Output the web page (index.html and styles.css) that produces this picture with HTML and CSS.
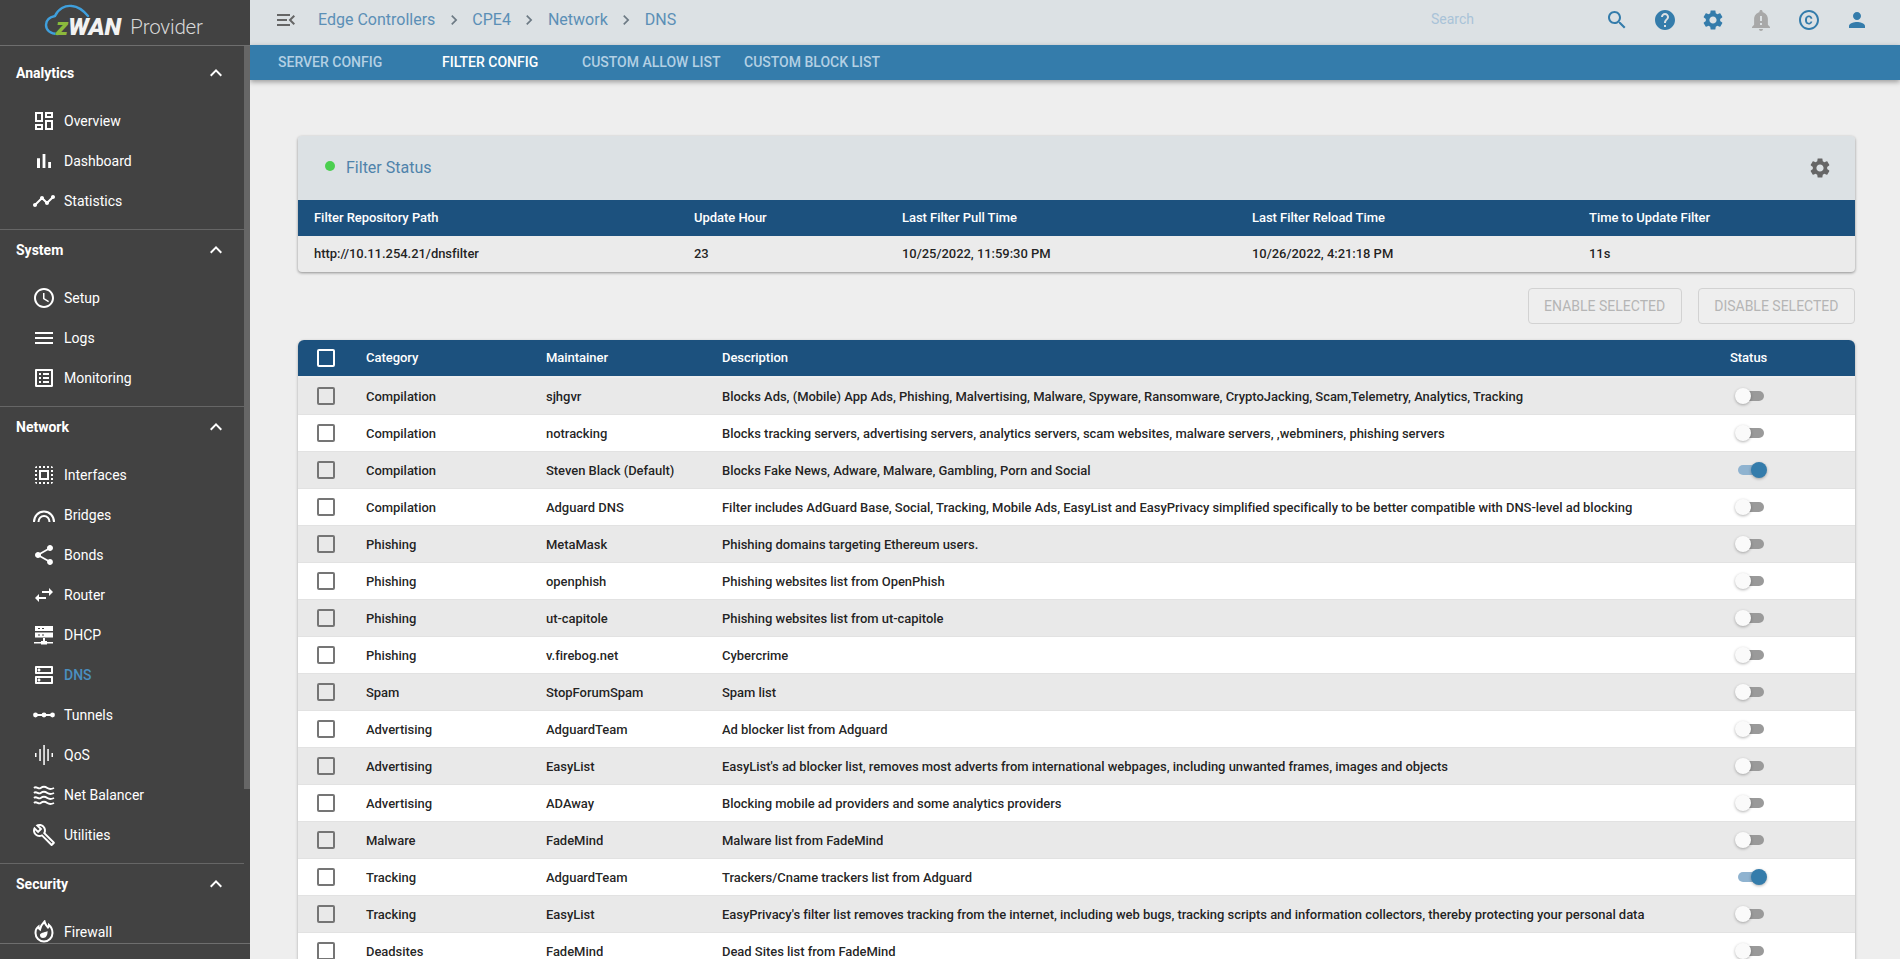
FILE: index.html
```html
<!DOCTYPE html>
<html lang="en">
<head>
  <meta charset="UTF-8" />
  <meta name="viewport" content="width=device-width, initial-scale=1.0" />
  <title>zWAN Provider - DNS</title>
  <link rel="stylesheet" href="styles.css">
</head>
<body>
  <aside class="sidebar">
    <div class="logo">
      <svg class="logo-cloud" viewBox="0 0 90 36" width="90" height="36"><path d="M14 30C6 30 2 26 2 21c0-5 4-8 9-9C14 5 21 1 28 2c6 .5 11 4 16 10" fill="none" stroke="#3f9fdc" stroke-width="2.4" stroke-linecap="round"/></svg>
      <span class="logo-mark"><span class="logo-z">z</span>WAN</span>
      <span class="logo-name">Provider</span>
    </div>
    <div class="side-body">
      <nav class="side-nav">
        <section class="side-group">
          <div class="group-title">Analytics <svg viewBox="0 0 24 24"><path d="M7.41 15.41L12 10.83l4.59 4.58L18 14l-6-6-6 6z"/></svg></div>
          <a class="side-item"><svg viewBox="0 0 24 24"><path d="M19 5v2h-4V5h4M9 5v6H5V5h4m10 8v6h-4v-6h4M9 17v2H5v-2h4M21 3h-8v6h8V3zM11 3H3v10h8V3zm10 8h-8v10h8V11zm-10 4H3v6h8v-6z"/></svg>Overview</a>
          <a class="side-item"><svg viewBox="0 0 24 24"><path d="M5 9.2h3V19H5zM10.6 5h2.8v14h-2.8zm5.6 8H19v6h-2.8z"/></svg>Dashboard</a>
          <a class="side-item"><svg viewBox="0 0 24 24"><path d="M23 8c0 1.1-.9 2-2 2-.18 0-.35-.02-.51-.07l-3.56 3.55c.05.16.07.34.07.52 0 1.1-.9 2-2 2s-2-.9-2-2c0-.18.02-.36.07-.52l-2.55-2.55c-.16.05-.34.07-.52.07s-.36-.02-.52-.07l-4.55 4.56c.05.16.07.33.07.51 0 1.1-.9 2-2 2s-2-.9-2-2 .9-2 2-2c.18 0 .35.02.51.07l4.56-4.55C8.02 9.36 8 9.18 8 9c0-1.1.9-2 2-2s2 .9 2 2c0 .18-.02.36-.07.52l2.55 2.55c.16-.05.34-.07.52-.07s.36.02.52.07l3.55-3.56C19.02 8.35 19 8.18 19 8c0-1.1.9-2 2-2s2 .9 2 2z"/></svg>Statistics</a>
        </section>
        <section class="side-group">
          <div class="group-title">System <svg viewBox="0 0 24 24"><path d="M7.41 15.41L12 10.83l4.59 4.58L18 14l-6-6-6 6z"/></svg></div>
          <a class="side-item"><svg viewBox="0 0 24 24"><path d="M11.99 2C6.47 2 2 6.48 2 12s4.47 10 9.99 10C17.52 22 22 17.52 22 12S17.52 2 11.99 2zM12 20c-4.42 0-8-3.58-8-8s3.58-8 8-8 8 3.58 8 8-3.58 8-8 8zm.5-13H11v6l5.25 3.15.75-1.23-4.5-2.67z"/></svg>Setup</a>
          <a class="side-item"><svg viewBox="0 0 24 24"><path d="M3 18h18v-2H3v2zm0-5h18v-2H3v2zm0-7v2h18V6H3z"/></svg>Logs</a>
          <a class="side-item"><svg viewBox="0 0 24 24"><path d="M19 5v14H5V5h14m1.1-2H3.9c-.5 0-.9.4-.9.9v16.2c0 .4.4.9.9.9h16.2c.4 0 .9-.5.9-.9V3.9c0-.5-.5-.9-.9-.9zM11 7h6v2h-6V7zm0 4h6v2h-6v-2zm0 4h6v2h-6zM7 7h2v2H7zm0 4h2v2H7zm0 4h2v2H7z"/></svg>Monitoring</a>
        </section>
        <section class="side-group">
          <div class="group-title">Network <svg viewBox="0 0 24 24"><path d="M7.41 15.41L12 10.83l4.59 4.58L18 14l-6-6-6 6z"/></svg></div>
          <a class="side-item"><svg viewBox="0 0 24 24"><path d="M3 5h2V3c-1.1 0-2 .9-2 2zm0 8h2v-2H3v2zm4 8h2v-2H7v2zM3 9h2V7H3v2zm10-6h-2v2h2V3zm6 0v2h2c0-1.1-.9-2-2-2zM5 21v-2H3c0 1.1.9 2 2 2zm-2-4h2v-2H3v2zM9 3H7v2h2V3zm2 18h2v-2h-2v2zm8-8h2v-2h-2v2zm0 8c1.1 0 2-.9 2-2h-2v2zm0-12h2V7h-2v2zm0 8h2v-2h-2v2zm-4 4h2v-2h-2v2zm0-16h2V3h-2v2zM7 17h10V7H7v10zm2-8h6v6H9V9z"/></svg>Interfaces</a>
          <a class="side-item"><svg viewBox="0 0 24 24"><path d="M2 19c0-6 4.5-10.5 10-10.500S22 13 22 19M6.500 19c0-3.500 2.500-6 5.500-6s5.500 2.500 5.500 6" fill="none" stroke="#fff" stroke-width="2"/></svg>Bridges</a>
          <a class="side-item"><svg viewBox="0 0 24 24"><path d="M18 16.08c-.76 0-1.44.3-1.96.77L8.91 12.7c.05-.23.09-.46.09-.7s-.04-.47-.09-.7l7.05-4.11c.54.5 1.25.81 2.04.81 1.66 0 3-1.34 3-3s-1.34-3-3-3-3 1.34-3 3c0 .24.04.47.09.7L8.04 9.81C7.5 9.31 6.79 9 6 9c-1.66 0-3 1.34-3 3s1.34 3 3 3c.79 0 1.5-.31 2.04-.81l7.12 4.16c-.05.21-.08.43-.08.65 0 1.61 1.31 2.92 2.92 2.92 1.61 0 2.92-1.31 2.92-2.92s-1.31-2.92-2.92-2.92z"/></svg>Bonds</a>
          <a class="side-item"><svg viewBox="0 0 24 24"><path d="M6.99 11L3 15l3.99 4v-3H14v-2H6.990v-3zM21 9l-3.990-4v3H10v2h7.010v3L21 9z"/></svg>Router</a>
          <a class="side-item"><svg viewBox="0 0 24 24"><path fill-rule="evenodd" d="M3 3h18v5H3zM6 5v1h2V5zm4 0v1h2V5zM3 9.500h18v5H3zM6 11.500v1h2v-1zm4 0v1h2v-1zM11 15h2v3h2v1h6v1.500h-6v1H9v-1H2V19h7v-1h2z"/></svg>DHCP</a>
          <a class="side-item is-active"><svg viewBox="0 0 24 24"><path d="M19 15v4H5v-4h14m1-2H4c-.55 0-1 .45-1 1v6c0 .55.45 1 1 1h16c.55 0 1-.45 1-1v-6c0-.55-.45-1-1-1zM7 18.500c-.82 0-1.500-.67-1.500-1.500s.68-1.500 1.500-1.500 1.500.67 1.500 1.500-.67 1.500-1.500 1.500zM19 5v4H5V5h14m1-2H4c-.55 0-1 .45-1 1v6c0 .55.45 1 1 1h16c.55 0 1-.45 1-1V4c0-.55-.45-1-1-1zM7 8.500c-.82 0-1.500-.67-1.500-1.500S6.180 5.500 7 5.500s1.500.68 1.500 1.500S7.830 8.500 7 8.500z"/></svg>DNS</a>
          <a class="side-item"><svg viewBox="0 0 24 24"><path d="M2 11h20v2H2z"/><circle cx="3.500" cy="12" r="2.400"/><circle cx="12" cy="12" r="2.400"/><circle cx="20.500" cy="12" r="2.400"/></svg>Tunnels</a>
          <a class="side-item"><svg viewBox="0 0 24 24"><path d="M3 10h1.500v4H3zM7.300 6h1.500v12H7.300zM11.300 2h1.500v20h-1.500zM15.300 6h1.500v12h-1.500zM19.500 10H21v4h-1.500z"/></svg>QoS</a>
          <a class="side-item"><svg viewBox="0 0 24 24"><path d="M2 5c2.500-2.400 4.300 1.800 6.700 0s4-1.800 6.600 0 4.200 1.200 6.700 0M2 10c2.500-2.400 4.300 1.800 6.700 0s4-1.800 6.600 0 4.200 1.200 6.700 0M2 15c2.500-2.400 4.300 1.800 6.700 0s4-1.800 6.600 0 4.200 1.200 6.700 0M2 20c2.500-2.400 4.300 1.800 6.700 0s4-1.800 6.600 0 4.200 1.200 6.700 0" fill="none" stroke="#fff" stroke-width="1.900"/></svg>Net Balancer</a>
          <a class="side-item"><svg viewBox="0 0 24 24"><path d="M22.610 18.990l-9.080-9.080c.93-2.340.45-5.100-1.440-7C9.790.61 6.210.4 3.660 2.260L7.500 6.110 6.080 7.520 2.250 3.690C.39 6.230.6 9.820 2.900 12.110c1.860 1.860 4.570 2.350 6.890 1.480l9.110 9.110c.39.39 1.020.39 1.410 0l2.300-2.300c.4-.38.4-1.010 0-1.410zm-3 1.600l-9.460-9.460c-.61.45-1.290.72-2 .82-1.360.2-2.790-.21-3.830-1.250C3.370 9.760 2.930 8.500 3 7.260l3.090 3.090 4.240-4.240-3.090-3.090c1.240-.07 2.490.37 3.440 1.310 1.080 1.080 1.490 2.570 1.240 3.960-.12.71-.42 1.370-.88 1.960l9.450 9.450-.88.88z"/></svg>Utilities</a>
        </section>
        <section class="side-group">
          <div class="group-title">Security <svg viewBox="0 0 24 24"><path d="M7.41 15.41L12 10.83l4.59 4.58L18 14l-6-6-6 6z"/></svg></div>
          <a class="side-item"><svg viewBox="0 0 24 24"><path d="M12.500 1.500c.6 3 2 4.500 3.500 6 .7-.7 1-1.700 1-2.500 2.300 2 3.500 5 3.500 8a8.500 8.500 0 0 1-17 0c0-2.700 1-5 3-6.500 0 1.300.6 2.300 1.500 3C8.500 6.500 10 4 12.500 1.500z" fill="none" stroke="#fff" stroke-width="2"/><path d="M15.500 11c.3 3.500-1 7-4.500 7-2 0-3-1.300-3-2.800 0-2.700 4-2.200 7.500-4.200z"/></svg>Firewall</a>
        </section>
      </nav>
      <div class="side-scroll"><div class="side-thumb"></div></div>
    </div>
    <div class="side-foot"></div>
  </aside>

  <div class="main">
    <header class="topbar">
      <svg class="menu-btn" viewBox="0 0 24 24"><path d="M3 18h13v-2H3v2zm0-5h10v-2H3v2zm0-7v2h13V6H3zm18 9.590L17.420 12 21 8.410 19.590 7l-5 5 5 5L21 15.590z"/></svg>
      <div class="crumbs">
        <a>Edge Controllers</a>
        <svg viewBox="0 0 24 24"><path d="M8.590 16.590L13.170 12 8.590 7.410 10 6l6 6-6 6z"/></svg>
        <a>CPE4</a>
        <svg viewBox="0 0 24 24"><path d="M8.590 16.590L13.170 12 8.590 7.410 10 6l6 6-6 6z"/></svg>
        <a>Network</a>
        <svg viewBox="0 0 24 24"><path d="M8.590 16.590L13.170 12 8.590 7.410 10 6l6 6-6 6z"/></svg>
        <a>DNS</a>
      </div>
      <span class="search-text">Search</span>
      <div class="top-icons">
        <svg viewBox="0 0 24 24"><path d="M15.500 14h-.79l-.28-.27C15.410 12.590 16 11.110 16 9.500 16 5.910 13.090 3 9.500 3S3 5.910 3 9.500 5.910 16 9.500 16c1.610 0 3.090-.59 4.230-1.570l.27.28v.79l5 4.990L20.490 19l-4.990-5zm-6 0C7.010 14 5 11.990 5 9.500S7.010 5 9.500 5 14 7.010 14 9.500 11.990 14 9.500 14z"/></svg>
        <svg viewBox="0 0 24 24"><path d="M12 2C6.480 2 2 6.480 2 12s4.480 10 10 10 10-4.480 10-10S17.520 2 12 2zm1 17h-2v-2h2v2zm2.070-7.750l-.9.920C13.450 12.900 13 13.500 13 15h-2v-.5c0-1.100.45-2.100 1.170-2.830l1.240-1.260c.37-.36.59-.86.59-1.410 0-1.100-.9-2-2-2s-2 .9-2 2H8c0-2.210 1.790-4 4-4s4 1.790 4 4c0 .88-.36 1.680-.93 2.250z"/></svg>
        <svg viewBox="0 0 24 24"><path d="M19.140 12.940c.04-.3.06-.61.06-.94 0-.32-.02-.64-.07-.94l2.030-1.580c.18-.14.23-.41.12-.61l-1.920-3.320c-.12-.22-.37-.29-.59-.22l-2.390.96c-.5-.38-1.030-.7-1.620-.94l-.36-2.540c-.04-.24-.24-.41-.48-.41h-3.840c-.24 0-.43.17-.47.41l-.36 2.540c-.59.24-1.130.57-1.620.94l-2.390-.96c-.22-.08-.47 0-.59.22L2.740 8.870c-.12.21-.08.47.12.61l2.030 1.580c-.05.3-.09.63-.09.94s.02.64.07.94l-2.030 1.580c-.18.14-.23.41-.12.61l1.920 3.320c.12.22.37.29.59.22l2.390-.96c.5.38 1.030.7 1.620.94l.36 2.540c.05.24.24.41.48.41h3.840c.24 0 .44-.17.47-.41l.36-2.540c.59-.24 1.130-.56 1.620-.94l2.390.96c.22.08.47 0 .59-.22l1.920-3.320c.12-.22.07-.47-.12-.61l-2.010-1.580zM12 15.600c-1.980 0-3.600-1.620-3.600-3.600s1.620-3.600 3.600-3.600 3.600 1.620 3.600 3.600-1.620 3.600-3.600 3.600z"/></svg>
        <svg class="bell" viewBox="0 0 24 24"><path d="M10.010 21.010c0 1.100.89 1.990 1.990 1.990s1.990-.89 1.990-1.990h-3.980zM18.880 16.820V11c0-3.250-2.250-5.970-5.290-6.690v-.72C13.590 2.710 12.880 2 12 2s-1.590.71-1.590 1.590v.72C7.370 5.030 5.120 7.750 5.120 11v5.820L3 18.940V20h18v-1.060l-2.120-2.120zM13 17h-2v-2h2v2zm0-4h-2V8h2v5z"/></svg>
        <svg viewBox="0 0 24 24"><path d="M10.080 10.860c.05-.33.16-.62.3-.87s.34-.46.59-.62c.24-.15.54-.22.91-.23.23.01.44.05.63.13.2.09.38.21.52.36s.25.33.34.53.13.42.14.64h1.790c-.02-.47-.11-.9-.28-1.290s-.4-.73-.7-1.010-.66-.5-1.080-.66-.88-.23-1.390-.23c-.65 0-1.220.11-1.700.34s-.88.53-1.200.92-.56.84-.71 1.360S8 11.290 8 11.870v.27c0 .58.08 1.120.23 1.640s.39.97.71 1.350.72.69 1.200.91 1.050.34 1.700.34c.47 0 .91-.08 1.320-.23s.77-.36 1.080-.63.56-.58.74-.94.29-.74.3-1.150h-1.790c-.01.21-.06.4-.15.58s-.21.33-.36.46-.32.23-.52.3c-.19.07-.39.09-.6.1-.36-.01-.66-.08-.89-.23-.25-.16-.45-.37-.59-.62s-.25-.55-.3-.88-.08-.67-.08-1v-.27c0-.35.03-.68.08-1.010zM12 2C6.480 2 2 6.480 2 12s4.480 10 10 10 10-4.480 10-10S17.520 2 12 2zm0 18c-4.410 0-8-3.590-8-8s3.590-8 8-8 8 3.590 8 8-3.590 8-8 8z"/></svg>
        <svg viewBox="0 0 24 24"><path d="M12 12c2.210 0 4-1.790 4-4s-1.790-4-4-4-4 1.790-4 4 1.790 4 4 4zm0 2c-2.670 0-8 1.340-8 4v2h16v-2c0-2.660-5.330-4-8-4z"/></svg>
      </div>
    </header>
    <div class="tabs">
      <a class="tab tab-server">SERVER CONFIG</a>
      <a class="tab tab-filter is-active">FILTER CONFIG</a>
      <a class="tab tab-allow">CUSTOM ALLOW LIST</a>
      <a class="tab">CUSTOM BLOCK LIST</a>
    </div>

    <main class="content">
      <section class="status-card">
        <div class="status-head">
          <span class="status-dot"></span>
          <h2>Filter Status</h2>
          <svg viewBox="0 0 24 24"><path d="M19.140 12.940c.04-.3.06-.61.06-.94 0-.32-.02-.64-.07-.94l2.030-1.580c.18-.14.23-.41.12-.61l-1.920-3.320c-.12-.22-.37-.29-.59-.22l-2.390.96c-.5-.38-1.030-.7-1.620-.94l-.36-2.540c-.04-.24-.24-.41-.48-.41h-3.840c-.24 0-.43.17-.47.41l-.36 2.540c-.59.24-1.130.57-1.620.94l-2.390-.96c-.22-.08-.47 0-.59.22L2.740 8.870c-.12.21-.08.47.12.61l2.030 1.580c-.05.3-.09.63-.09.94s.02.64.07.94l-2.030 1.580c-.18.14-.23.41-.12.61l1.920 3.320c.12.22.37.29.59.22l2.390-.96c.5.38 1.030.7 1.620.94l.36 2.540c.05.24.24.41.48.41h3.840c.24 0 .44-.17.47-.41l.36-2.540c.59-.24 1.130-.56 1.620-.94l2.390.96c.22.08.47 0 .59-.22l1.920-3.320c.12-.22.07-.47-.12-.61l-2.010-1.580zM12 15.600c-1.980 0-3.600-1.620-3.600-3.600s1.620-3.600 3.600-3.600 3.600 1.620 3.600 3.600-1.620 3.600-3.600 3.600z"/></svg>
        </div>
        <div class="status-row status-labels">
          <span>Filter Repository Path</span><span>Update Hour</span><span>Last Filter Pull Time</span><span>Last Filter Reload Time</span><span>Time to Update Filter</span>
        </div>
        <div class="status-row status-values">
          <span>http://10.11.254.21/dnsfilter</span><span>23</span><span>10/25/2022, 11:59:30 PM</span><span>10/26/2022, 4:21:18 PM</span><span>11s</span>
        </div>
      </section>

      <div class="actions">
        <button class="ghost-btn">ENABLE SELECTED</button>
        <button class="ghost-btn">DISABLE SELECTED</button>
      </div>

      <section class="filters">
        <div class="filter-row filter-head">
          <span class="check"></span><span>Category</span><span>Maintainer</span><span>Description</span><span>Status</span>
        </div>
        <div class="filter-body">
          <div class="filter-row"><span class="check"></span><span>Compilation</span><span>sjhgvr</span><span>Blocks Ads, (Mobile) App Ads, Phishing, Malvertising, Malware, Spyware, Ransomware, CryptoJacking, Scam,Telemetry, Analytics, Tracking</span><span class="switch"></span></div>
          <div class="filter-row"><span class="check"></span><span>Compilation</span><span>notracking</span><span>Blocks tracking servers, advertising servers, analytics servers, scam websites, malware servers, ,webminers, phishing servers</span><span class="switch"></span></div>
          <div class="filter-row"><span class="check"></span><span>Compilation</span><span>Steven Black (Default)</span><span>Blocks Fake News, Adware, Malware, Gambling, Porn and Social</span><span class="switch is-on"></span></div>
          <div class="filter-row"><span class="check"></span><span>Compilation</span><span>Adguard DNS</span><span>Filter includes AdGuard Base, Social, Tracking, Mobile Ads, EasyList and EasyPrivacy simplified specifically to be better compatible with DNS-level ad blocking</span><span class="switch"></span></div>
          <div class="filter-row"><span class="check"></span><span>Phishing</span><span>MetaMask</span><span>Phishing domains targeting Ethereum users.</span><span class="switch"></span></div>
          <div class="filter-row"><span class="check"></span><span>Phishing</span><span>openphish</span><span>Phishing websites list from OpenPhish</span><span class="switch"></span></div>
          <div class="filter-row"><span class="check"></span><span>Phishing</span><span>ut-capitole</span><span>Phishing websites list from ut-capitole</span><span class="switch"></span></div>
          <div class="filter-row"><span class="check"></span><span>Phishing</span><span>v.firebog.net</span><span>Cybercrime</span><span class="switch"></span></div>
          <div class="filter-row"><span class="check"></span><span>Spam</span><span>StopForumSpam</span><span>Spam list</span><span class="switch"></span></div>
          <div class="filter-row"><span class="check"></span><span>Advertising</span><span>AdguardTeam</span><span>Ad blocker list from Adguard</span><span class="switch"></span></div>
          <div class="filter-row"><span class="check"></span><span>Advertising</span><span>EasyList</span><span>EasyList's ad blocker list, removes most adverts from international webpages, including unwanted frames, images and objects</span><span class="switch"></span></div>
          <div class="filter-row"><span class="check"></span><span>Advertising</span><span>ADAway</span><span>Blocking mobile ad providers and some analytics providers</span><span class="switch"></span></div>
          <div class="filter-row"><span class="check"></span><span>Malware</span><span>FadeMind</span><span>Malware list from FadeMind</span><span class="switch"></span></div>
          <div class="filter-row"><span class="check"></span><span>Tracking</span><span>AdguardTeam</span><span>Trackers/Cname trackers list from Adguard</span><span class="switch is-on"></span></div>
          <div class="filter-row"><span class="check"></span><span>Tracking</span><span>EasyList</span><span>EasyPrivacy's filter list removes tracking from the internet, including web bugs, tracking scripts and information collectors, thereby protecting your personal data</span><span class="switch"></span></div>
          <div class="filter-row"><span class="check"></span><span>Deadsites</span><span>FadeMind</span><span>Dead Sites list from FadeMind</span><span class="switch"></span></div>
        </div>
      </section>
    </main>
  </div>
</body>
</html>
```

FILE: styles.css
```css
* { box-sizing: border-box; }
html { height: 959px; overflow: hidden; }
body {
  margin: 0;
  display: flex;
  height: 959px;
  overflow: hidden;
  background: #eee;
  font-family: Roboto, sans-serif;
  font-size: 13px;
  color: rgba(0,0,0,0.87);
}

/* sidebar */
.sidebar {
  width: 250px;
  flex: none;
  display: flex;
  flex-direction: column;
  background: #424242;
  color: #fff;
}
.logo {
  position: relative;
  height: 46px;
  flex: none;
  display: flex;
  align-items: flex-end;
  padding: 0 0 4px 56px;
  border-bottom: 1px solid #6e6e6e;
}
.logo-cloud { position: absolute; left: 44px; top: 4px; }
.logo-mark {
  position: relative;
  font-size: 24.5px;
  line-height: 28px;
  font-weight: 900;
  font-style: italic;
  color: #f2f2f2;
}
.logo-z { color: #8cb93c; }
.logo-name {
  margin-left: 9px;
  font-size: 20.5px;
  line-height: 28px;
  font-weight: 300;
  letter-spacing: -0.2px;
  color: #d8d8d8;
}
.side-body { flex: 1; display: flex; min-height: 0; }
.side-nav { width: 244px; flex: none; padding-top: 7px; overflow: hidden; }
.side-scroll { width: 6px; flex: none; }
.side-thumb { height: 743px; background: #666; }
.side-foot { height: 16px; flex: none; border-top: 1px solid #6e6e6e; }
.side-group { padding-bottom: 8px; border-bottom: 1px solid #666; }
.side-group:last-child { border-bottom: 0; }
.group-title {
  height: 40px;
  margin-bottom: 8px;
  padding: 0 16px;
  display: flex;
  align-items: center;
  justify-content: space-between;
  font-size: 14px;
  font-weight: 700;
}
.group-title svg { width: 24px; height: 24px; fill: #fff; }
.side-item {
  height: 40px;
  padding-left: 32px;
  display: flex;
  align-items: center;
  gap: 8px;
  font-size: 14px;
  color: #fff;
}
.side-item svg { width: 24px; height: 24px; flex: none; fill: #fff; }
.side-item.is-active { color: #4a8fc0; font-weight: 500; }

/* top bars */
.main { flex: 1; min-width: 0; height: 959px; overflow: hidden; display: flex; flex-direction: column; }
.topbar {
  height: 45px;
  flex: none;
  display: flex;
  align-items: center;
  background: #dce1e4;
  padding: 0 0 5px 24px;
}
.menu-btn { width: 24px; height: 24px; fill: #666; margin-right: 20px; }
.crumbs { display: flex; align-items: center; font-size: 16px; color: #5b8fb6; }
.crumbs a { padding-bottom: 2px; }
.crumbs svg { width: 20px; height: 20px; fill: #6d7a84; margin: 0 8.5px; }
.search-text { margin-left: auto; padding-bottom: 2px; font-size: 14px; color: #a9c3d8; }
.top-icons { display: flex; margin-left: 119px; margin-right: 19px; }
.top-icons svg { width: 24px; height: 24px; margin: 0 12px; fill: #347cab; }
.top-icons .bell { fill: #a8a8a8; }
.tabs {
  position: relative;
  height: 35px;
  flex: none;
  display: flex;
  align-items: center;
  padding: 0 0 2px 28px;
  background: #347cab;
  box-shadow: 0 2px 5px rgba(0,0,0,0.35);
}
.tab { font-size: 14px; font-weight: 500; color: #b3d0e4; }
.tab.is-active { color: #fff; }
.tab-server { width: 164px; }
.tab-filter { width: 140px; }
.tab-allow { width: 162px; }

/* content */
.content { flex: 1; min-height: 0; overflow: hidden; padding: 56px 45px 0 48px; }
.status-card {
  border-radius: 4px;
  overflow: hidden;
  background: #ebebeb;
  box-shadow: 0 1px 3px rgba(0,0,0,0.4);
}
.status-head {
  height: 64px;
  padding-left: 27px;
  display: flex;
  align-items: center;
  background: #dce1e4;
}
.status-dot { width: 10px; height: 10px; border-radius: 50%; margin-top: -5px; background: #4bcf4f; }
.status-head h2 { margin: 0 0 1px 11px; font-size: 16px; font-weight: 400; color: #4f83ab; }
.status-head svg { width: 24px; height: 24px; margin-left: auto; margin-right: 23px; fill: #666; }
.status-row {
  display: grid;
  grid-template-columns: 380px 208px 350px 337px 1fr;
  align-items: center;
  padding: 0 0 1px 16px;
  height: 36px;
  font-weight: 500;
  letter-spacing: -0.04px;
}
.status-labels { background: #1c517e; color: #fff; }
.actions { display: flex; justify-content: flex-end; gap: 16px; margin: 16px 0; }
.ghost-btn {
  height: 36px;
  padding: 0 15.500px;
  border: 1px solid #d2d2d2;
  border-radius: 4px;
  background: transparent;
  font-family: inherit;
  font-size: 14px;
  color: #b5b5b5;
}
.filters { border-radius: 6px 6px 0 0; box-shadow: 0 1px 3px rgba(0,0,0,0.3); }
.filter-row {
  display: grid;
  grid-template-columns: 68px 180px 176px 1008px 1fr;
  align-items: center;
  height: 37px;
  font-weight: 500;
  letter-spacing: -0.04px;
  background: #fff;
  border-bottom: 1px solid #e2e2e2;
}
.filter-head { height: 36px; padding-bottom: 1px; border-radius: 6px 6px 0 0; background: #1c517e; color: #fff; border-bottom: 0; }
.filter-body { padding-top: 2px; background: #eee; }
.filter-body .filter-row:nth-child(odd) { background: #e9e9e9; }
.check {
  width: 18px;
  height: 18px;
  margin-left: 19px;
  border: 2px solid #757575;
  border-radius: 2px;
}
.filter-head .check { margin-top: 1px; border-color: #fff; }
.switch {
  position: relative;
  display: block;
  width: 26px;
  height: 10px;
  margin-left: 8px;
  border-radius: 5px;
  background: #9a9a9a;
}
.switch::after {
  content: "";
  position: absolute;
  left: -3px;
  top: -3px;
  width: 16px;
  height: 16px;
  border-radius: 50%;
  background: #fafafa;
  box-shadow: 0 1px 3px rgba(0,0,0,0.3);
}
.switch.is-on { background: #8fb3d0; }
.switch.is-on::after { left: 13px; background: #347cab; }
```
